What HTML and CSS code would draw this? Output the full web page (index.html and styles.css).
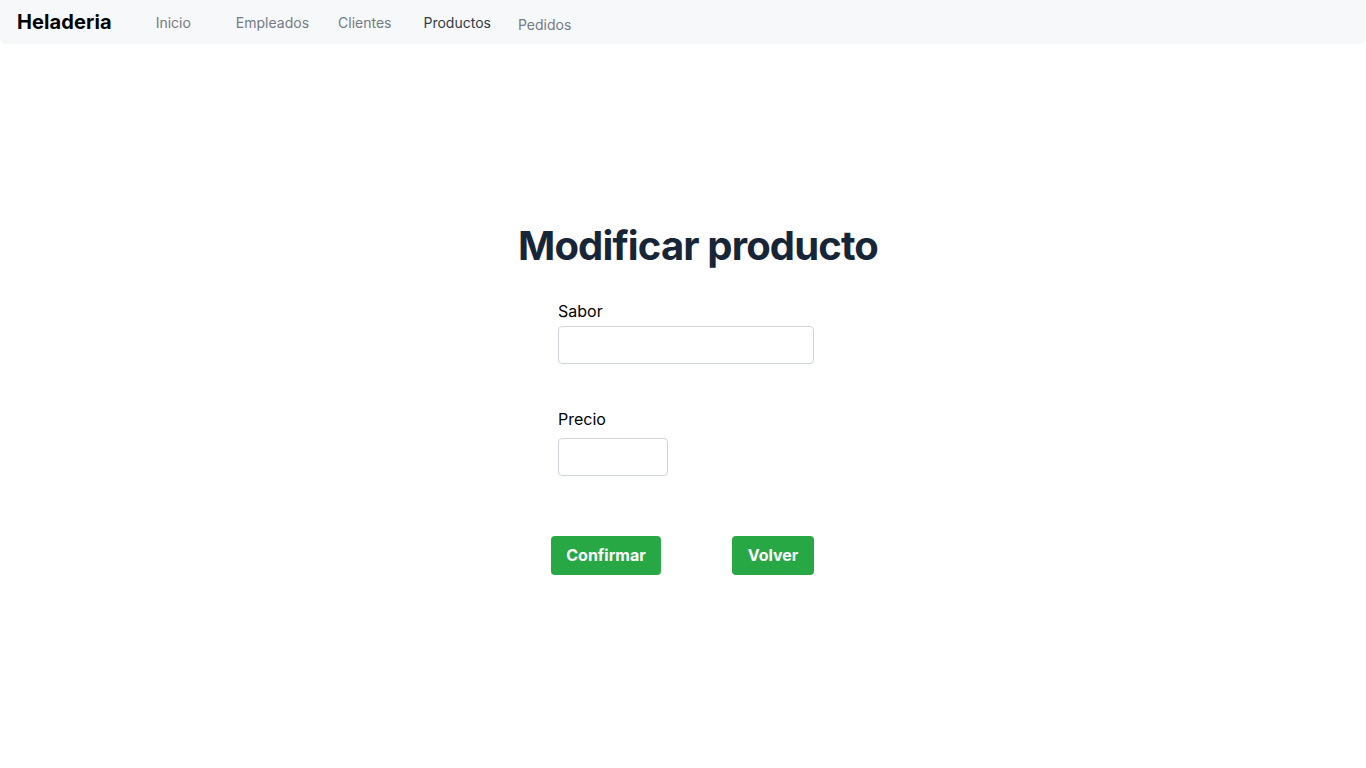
FILE: index.html
```html
<!DOCTYPE html>
<html lang="es">
<head>
<meta charset="utf-8">
<title>Heladeria</title>
<link rel="stylesheet" href="styles.css">
</head>
<body>
<nav class="navbar">
  <a class="brand" href="#">Heladeria</a>
  <ul class="nav">
    <li class="nav-item nav-inicio"><a href="#">Inicio</a></li>
    <li class="nav-item nav-empleados"><a href="#">Empleados</a></li>
    <li class="nav-item nav-clientes"><a href="#">Clientes</a></li>
    <li class="nav-item nav-productos active"><a href="#">Productos</a></li>
    <li class="nav-item nav-pedidos"><a href="#">Pedidos</a></li>
  </ul>
</nav>
<main class="main">
  <h1 class="title">Modificar producto</h1>
  <form class="form">
    <div class="field field-sabor">
      <label class="label" for="sabor">Sabor</label>
      <input class="input input-wide" id="sabor" type="text">
    </div>
    <div class="field field-precio">
      <label class="label" for="precio">Precio</label>
      <input class="input input-narrow" id="precio" type="text">
    </div>
    <div class="actions">
      <button class="btn btn-confirm" type="button">Confirmar</button>
      <button class="btn btn-back" type="button">Volver</button>
    </div>
  </form>
</main>
</body>
</html>
```
FILE: styles.css
```css
* { box-sizing: border-box; }
html, body { margin: 0; padding: 0; background: #fff; }
body { font-family: Inter, "Noto Sans", sans-serif; color: #000; }
a { text-decoration: none; }

.navbar {
  height: 44px;
  background: #f7f8fa;
  border-radius: 0 0 6px 6px;
  display: flex;
  align-items: center;
  padding-left: 17px;
}
.brand {
  font-family: Inter, sans-serif;
  font-weight: 700;
  font-size: 20px;
  color: #000;
  letter-spacing: 0.1px;
  margin-top: -1px;
}
.nav {
  list-style: none;
  display: flex;
  margin: 0;
  padding: 0;
  padding-top: 2px;
}
.nav-item a {
  font-size: 14px;
  color: #747b83;
}
.nav-item.active a { color: #323b46; }
.nav-inicio { margin-left: 44px; }
.nav-empleados { margin-left: 45px; }
.nav-clientes { margin-left: 29px; }
.nav-productos { margin-left: 32px; }
.nav-pedidos { margin-left: 27px; padding-top: 2px; }

.main {
  display: flex;
  flex-direction: column;
  align-items: center;
  padding-top: 177px;
}
.title {
  margin: 0 0 0 30px;
  font-size: 40px;
  line-height: 50px;
  font-weight: 700;
  color: #172538;
  letter-spacing: -0.85px;
}
.form {
  width: 264px;
  margin-top: 28px;
}
.field {
  display: flex;
  flex-direction: column;
  align-items: flex-start;
  padding-left: 7px;
}
.field-sabor { margin-bottom: 43px; }
.field-precio { margin-bottom: 60px; }
.label {
  font-size: 16px;
  line-height: 24px;
  margin-bottom: 3px;
  color: #000;
}
.field-precio .label { margin-bottom: 7px; }
.input {
  height: 38px;
  border: 1px solid #ced4da;
  border-radius: 4px;
  background: #fff;
  font-family: inherit;
  font-size: 16px;
  padding: 6px 12px;
}
.input-wide { width: 256px; }
.input-narrow { width: 110px; }
.actions {
  display: flex;
  justify-content: space-between;
  margin-right: 1px;
}
.btn {
  height: 39px;
  border: none;
  border-radius: 4px;
  background: #28a745;
  color: #fff;
  font-family: inherit;
  font-size: 16px;
  font-weight: 700;
  padding: 0 0 2px;
  cursor: pointer;
}
.btn-confirm { width: 110px; }
.btn-back { width: 82px; }
```
